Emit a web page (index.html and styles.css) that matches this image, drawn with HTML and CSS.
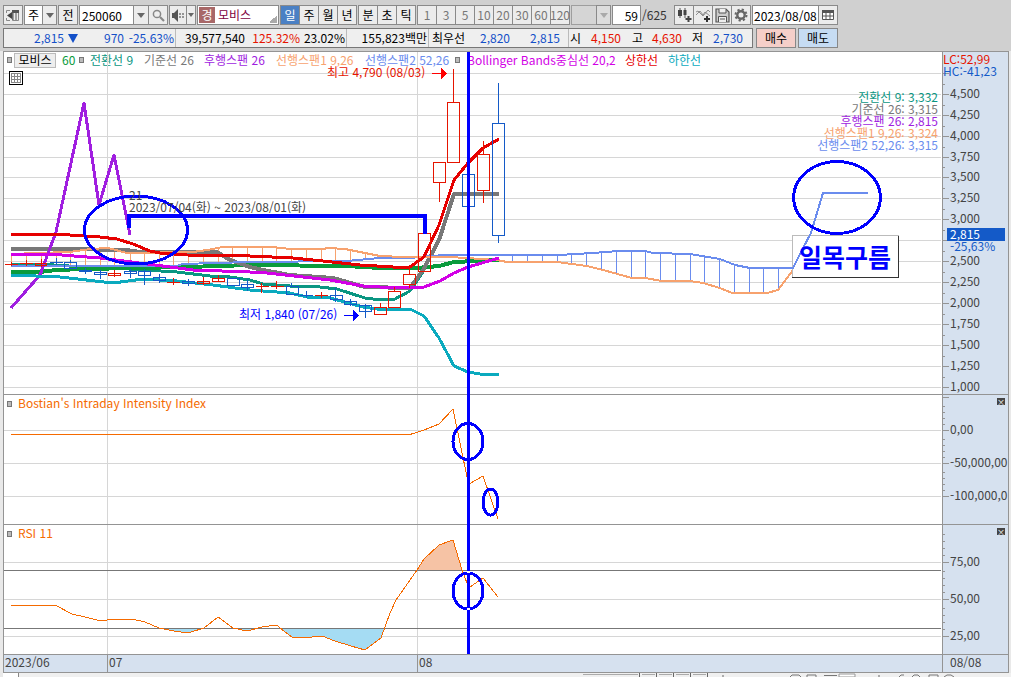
FILE: index.html
```html
<!DOCTYPE html>
<html lang="ko">
<head>
<meta charset="utf-8">
<title>모비스 250060</title>
<link rel="stylesheet" href="styles.css">
</head>
<body>
<header class="top">
  <div class="toolbar">
    <button class="btn" aria-label="패널 접기"><svg width="14" height="13" viewBox="0 0 14 13"><path d="M.5 4V1.500H4M.5 9v2.500H4M6.500 1.500h6v10h-6z" fill="#eee" stroke="#888"/><path d="M6 1h7v3H6z" fill="#555"/><path d="M1 6.500L6 3v7z" fill="#444"/><path d="M7 4v7M10 4v7" stroke="#555"/></svg></button>
    <div class="group"><button class="btn white">주</button><button class="btn arrow" aria-label="종목 구분"><i class="down"></i></button></div>
    <button class="btn">전</button>
    <div class="group"><input class="field code" aria-label="종목코드" value="250060"><button class="btn drop" aria-label="코드 목록"><i class="down"></i></button><button class="btn" aria-label="검색"><svg width="13" height="13" viewBox="0 0 13 13"><circle cx="5" cy="5" r="3.600" fill="#eee" stroke="#888" stroke-width="1.500"/><path d="M8 8l4 4" stroke="#888" stroke-width="2.200"/></svg></button></div>
    <div class="group"><button class="btn sound" aria-label="소리"><svg width="13" height="13" viewBox="0 0 13 13"><path d="M0 4h2l4-4v13L2 9H0z" fill="#555"/><path d="M8 4v5M11 4v5" stroke="#777" stroke-width="1.500" stroke-dasharray="2 1"/></svg></button><button class="btn tiny" aria-label="소리 설정"><i class="down"></i></button></div>
    <div class="field stock"><span class="mark">경</span><span>모비스</span></div>
    <div class="group"><button class="btn on">일</button><button class="btn">주</button><button class="btn">월</button><button class="btn">년</button></div>
    <div class="group"><button class="btn">분</button><button class="btn">초</button><button class="btn">틱</button></div>
    <div class="group dim"><button class="btn">1</button><button class="btn">3</button><button class="btn">5</button><button class="btn">10</button><button class="btn">20</button><button class="btn">30</button><button class="btn">60</button><button class="btn">120</button></div>
    <div class="group dim"><select class="pick" aria-label="주기" disabled><option></option></select><span class="btn arrow"><i class="down"></i></span></div>
    <div class="group count"><input class="field num" id="bars" aria-label="봉 개수" value="59"><label for="bars">/625</label></div>
    <div class="group tools">
      <button class="btn" aria-label="차트 추가"><svg width="15" height="14" viewBox="0 0 15 14"><path d="M3 0v10M8 0v10" stroke="#555"/><path d="M1 2h4v6H1zM6.500 2h3v5h-3z" fill="#444"/><path d="M11.500 8v6M8.500 11h6" stroke="#444" stroke-width="2"/></svg></button>
      <button class="btn" aria-label="지표 추가"><svg width="15" height="14" viewBox="0 0 15 14"><path d="M0 4l2-1 5 5 5-6 2 2M0 7l4-4 3 4 2-3 5 4" fill="none" stroke="#777" stroke-width=".8"/><path d="M11 8v6M8 11h6" stroke="#333" stroke-width="2"/></svg></button>
      <button class="btn" aria-label="저장"><svg width="15" height="15" viewBox="0 0 15 15"><path d="M1 1h10l3 3v10H1z" fill="#ccc" stroke="#555" stroke-width="1.200"/><path d="M4 1v4h7V1M3.500 14V8.500h8V14M5 11h5" fill="#eee" stroke="#555"/></svg></button>
      <button class="btn" aria-label="설정"><svg width="14" height="14" viewBox="0 0 14 14"><circle cx="7" cy="7" r="3.700" fill="none" stroke="#666" stroke-width="2.400"/><circle cx="7" cy="7" r="5.500" fill="none" stroke="#666" stroke-width="2" stroke-dasharray="2.200 2.120"/></svg></button>
    </div>
    <div class="group"><input class="field date" aria-label="날짜" value="2023/08/08"><button class="btn" aria-label="달력"><svg width="12" height="12" viewBox="0 0 12 12"><path d="M.5 1.500h11v9H.5zM4 4v7M8 4v7M0 7h12" fill="#fff" stroke="#555"/><path d="M0 1h12v3H0z" fill="#555"/></svg></button></div>
  </div>
  <div class="quote">
    <div class="figures">
      <div class="cell price blue"><span>2,815</span><i class="fall"></i><span>970</span><span>-25.63%</span></div>
      <div class="cell volume"><span>39,577,540</span><span class="red">125.32%</span><span>23.02%</span></div>
      <div class="cell amount"><span>155,823백만</span></div>
      <div class="cell best"><b>최우선</b><span class="blue">2,820</span><span class="blue">2,815</span></div>
      <div class="cell range"><b>시</b><span class="red">4,150</span><b>고</b><span class="red">4,630</span><b>저</b><span class="blue">2,730</span></div>
    </div>
    <button class="trade buy">매수</button>
    <button class="trade sell">매도</button>
  </div>
</header>
<main class="chart">
  <div class="legend">
    <i class="knob"></i><button class="name">모비스</button><span class="c-green">60</span>
    <i class="knob"></i><span class="c-teal">전환선 9</span><span class="c-gray">기준선 26</span><span class="c-purple">후행스팬 26</span><span class="c-orange">선행스팬1 9,26</span><span class="c-sky">선행스팬2 52,26</span>
    <i class="knob"></i><span class="c-pink">Bollinger Bands중심선 20,2</span><span class="c-red">상한선</span><span class="c-cyan">하한선</span>
  </div>
  <svg class="plot" viewBox="3 51 1006 622" role="img" aria-label="모비스 일봉 차트">
    <g class="crisp">
      <path class="axis-bg" d="M943 52h65v620h-65zM4 655h939v17H4z"/>
      <path class="grid" d="M4 73.500H941M4 94.500H941M4 115.500H941M4 136.500H941M4 157.500H941M4 177.500H941M4 198.500H941M4 219.500H941M4 240.500H941M4 261.500H941M4 282.500H941M4 303.500H941M4 324.500H941M4 345.500H941M4 366.500H941M4 387.500H941M4 430.500H941M4 463.500H941M4 496.500H941M4 562.500H941M4 599.500H941M4 636.500H941M107.500 52V654M417.500 52V654"/>
      <path class="frame" d="M3.500 51.500H1008.500V672.500H3.500zM3 394.500H1008M3 524.500H1008M3 654.500H1008M942.500 52V672M107.500 654V672M417.500 654V672"/>
      <path class="frame" d="M943 73.500h6M943 94.500h6M943 115.500h6M943 136.500h6M943 157.500h6M943 177.500h6M943 198.500h6M943 219.500h6M943 240.500h6M943 261.500h6M943 282.500h6M943 303.500h6M943 324.500h6M943 345.500h6M943 366.500h6M943 387.500h6M943 397.500h6M943 430.500h6M943 463.500h6M943 496.500h6M943 562.500h6M943 599.500h6M943 636.500h6"/>
      <path class="frame" d="M943 84.500h2M943 105.500h2M943 126.500h2M943 147.500h2M943 167.500h2M943 188.500h2M943 209.500h2M943 230.500h2M943 251.500h2M943 272.500h2M943 293.500h2M943 314.500h2M943 335.500h2M943 356.500h2M943 377.500h2M943 406.500h2M943 412.500h2M943 418.500h2M943 424.500h2M943 439.500h2M943 445.500h2M943 451.500h2M943 457.500h2M943 472.500h2M943 478.500h2M943 484.500h2M943 490.500h2M943 534.500h2M943 541.500h2M943 548.500h2M943 555.500h2M943 571.500h2M943 578.500h2M943 585.500h2M943 592.500h2M943 608.500h2M943 615.500h2M943 622.500h2M943 629.500h2"/>
      <path class="tool" d="M9.500 71.500h13v13h-13z"/><path class="tool-grid" d="M11.500 73.500h9v9h-9zM14.500 73v9M17.500 73v9M11 76.500h9M11 79.500h9"/>

      <path class="cloud-up" d="M11.500 254V265M26.500 254V265M41.500 254V265M56.500 254V265M70.500 252V265M85.500 250V265M100.500 248V265M114.500 249V265M130.500 253V265M144.500 253V265M159.500 253V265M173.500 253V265M188.500 252V264M203.500 251V263M218.500 248V263M232.500 247V262M247.500 247V261M262.500 247V261M276.500 247V261M291.500 249V261M306.500 249V261M321.500 249V261M335.500 248V260M350.500 250V260M365.500 253V259"/>
      <path class="cloud-down" d="M512.500 255V262M527.500 255V262M542.500 255V262M557.500 254V262M571.500 254V264M586.500 254V266M601.500 253V270M616.500 251V274M631.500 251V278M645.500 251V278M660.500 253V281M675.500 253V281M690.500 254V281M704.500 256V284M719.500 259V288M734.500 265V293M749.500 268V293M763.500 268V293M778.500 268V289"/>
      <path class="line teal" d="M11 264L40 264 83 267 113 268 177 272 210 276 230 277 250 280 263 284 290 286 320 287 337 289 365 298 373 299 395 299 410 291 423 272 439 240 454 193 499 193"/>
      <path class="line green" d="M11 272L40 272 56 270 84 269 187 267 250 265 347 266 380 268 417 268 439 266 454 262 499 260"/>
      <path class="line gray" d="M11 248.500L90 248.500 97 250 127 250 140 252 217 252 230 260 250 267 263 270 290 275 333 278 365 287 410 288 423 270 439 240 454 194 499 194"/>
      <path class="line sky" d="M11 266L177 266 182 264 250 262 347 261 380 258 410 258 430 256 447 255 558 255 593 253 618 251 645 251 653 253 690 254 720 259 735 265 750 268 790 268"/>
      <path class="line orange" d="M11 254L37 253 70 252 90 249 108 248 127 253 193 252 207 250 223 247 273 247 290 249 323 249 328 248 345 249 360 252 380 256 403 257 450 257 497 260 507 262 557 262 587 266 603 270 632 278 645 278 662 281 690 281 703 283 720 288 732 293 767 293 778 290 793 270"/>
      <path class="line purple" d="M11 308L40 275 56 232 84 103 99 205 114 155 130 235"/>
      <path class="line cyan" d="M11 275L60 277 113 283 143 279 177 281 213 285 250 290 263 291 290 293 307 297 330 298 363 307 377 309 410 309 424 316 439 338 454 366 468 372 480 374 499 374"/>
      <path class="line red-line" d="M11 234L55 234 70 235 100 237 117 239 133 244 150 251 160 253 187 255 250 256 293 258 323 261 360 265 393 267 410 267 424 257 439 225 454 180 468 163 483 148 499 139"/>
      <path class="line pink" d="M11 254.500L55 254.500 100 258 147 264 193 270 250 272 267 273 330 280 363 286 397 288 424 287 440 281 454 273 468 267 499 258"/>

      <path class="up" d="M5 264.500h13M11.500 262v4M20 263.500h13M26.500 260v6M35.500 263.500h11v2h-11zM41.500 259v8M108.500 273.500h12v2h-12zM114.500 270v7M167 282.500h13M173.500 278v7M197.500 281.500h12v2h-12zM203.500 277v8M212.500 278.500h12v3h-12zM218.500 275v7M256 286.500h13M261.500 283v10M271 286.500h13M276.500 281v8M315 295.500h13M321.500 292v6M374.500 307.500h12v7h-12zM380.500 303v4M388.500 291.500h12v16h-12zM394.500 287v4M403.500 274.500h12v10h-12zM409.500 267v7M409.500 285v3M418.500 233.500h12v38h-12zM433.500 162.500h12v20h-12zM439.500 183v19M447.500 102.500h12v60h-12zM453.500 69v33M477.500 154.500h12v36h-12zM483.500 141v13M483.500 191v12"/>
      <path class="down-candle" d="M50 262.500h13M56.500 258v7M64.500 262.500h12v6h-12zM70.500 260v2M79.500 270.500h12v1h-12zM85.500 268v6M94.500 272.500h12v2h-12zM100.500 270v9M124.500 271.500h12v2h-12zM130.500 269v9M138.500 271.500h12v4h-12zM144.500 269v16M153.500 277.500h12v3h-12zM159.500 274v9M182.500 281.500h12v2h-12zM188.500 279v7M227.500 278.500h12v7h-12zM241.500 284.500h12v3h-12zM247.500 279v12M286.500 286.500h12v8h-12zM291.500 283v3M300 295.500h13M306.500 291v7M330.500 295.500h12v4h-12zM335.500 288v14M344.500 301.500h12v3h-12zM350.500 299v7M359.500 305.500h12v6h-12zM365.500 304v14M462.500 174.500h12v32h-12zM492.500 123.500h12v112h-12zM498.500 83v40M498.500 236v7"/>

      <path class="hot" d="M417 570L424 559 439 545 453 540 462 570z"/>
      <path class="cold" d="M159 628L174 631 188 633 204 628zM233 628L247 631 259 628zM280 628L292 637 312 637 322 636 335 641 351 646 365 650 381 638 385 628z"/>
      <path class="band" d="M4 570.500H941M4 628.500H941"/>
      <path class="index" d="M11 434.500L410 434.500 424 430 439 424 453 409 467 477 469 484 483 476 498 519"/>
      <path class="index" d="M11 605.500L56 605.500 72 614 85 617 97 620 107 620 109 619 132 619 145 622 159 628 174 631 188 633 204 628 218 617 233 628 247 631 262 627 277 625 280 628 292 637 312 637 322 636 335 641 351 646 365 650 381 638 390 613 396 600 417 570 424 559 439 545 453 540 462 570 467 583 470 587 483 578 498 597"/>

      <path class="note" d="M792 235h107v43H792z"/>
      <path class="note-light" d="M792.500 278V235.500H899"/>
      <path class="note-dark" d="M898.500 236V277.500H792"/>
      <path class="line sky" d="M790 268L793 268 802 250 811 233 823 193 868 193"/>
      <g class="draw">
        <ellipse cx="136" cy="230" rx="51.500" ry="34"/>
        <ellipse cx="837" cy="197.500" rx="43.500" ry="36"/>
        <ellipse cx="468" cy="441.500" rx="15" ry="18"/>
        <ellipse cx="490.500" cy="502" rx="7.500" ry="13"/>
        <ellipse cx="468" cy="591" rx="15" ry="18"/>
        <path d="M468.500 52V654"/>
        <path class="bracket" d="M129 228V216H425V234"/>
      </g>
      <path class="handle" d="M467 571h3v2h-3zM467 608h3v2h-3z"/>
      <path class="arrow-hi" d="M432 73h9v-5l6 5.500-6 5.500v-5h-9z"/>
      <path class="arrow-lo" d="M344 315h9v-5l6 5.500-6 5.500v-5h-9z"/>
      <path class="now" d="M947 228h58v13h-58z"/>
      <path class="square" d="M7.500 401.500h4v5h-4zM7.500 531.500h4v5h-4z"/>
    </g>
    <g class="c-red"><text x="943" y="64">LC:52,99</text><text x="327" y="77" class="hi">최고 4,790 (08/03)</text></g>
    <text x="943" y="76" class="c-now">HC:-41,23</text>
    <text x="239" y="319" class="c-blue">최저 1,840 (07/26)</text>
    <g class="c-dark"><text x="129" y="200">21</text><text x="129" y="212">2023/07/04(화) ~ 2023/08/01(화)</text></g>
    <g class="end">
      <text x="938" y="102" class="c-teal">전환선 9: 3,332</text>
      <text x="938" y="114" class="c-gray">기준선 26: 3,315</text>
      <text x="938" y="126" class="c-purple">후행스팬 26: 2,815</text>
      <text x="938" y="138" class="c-orange">선행스팬1 9,26: 3,324</text>
      <text x="938" y="150" class="c-sky">선행스팬2 52,26: 3,315</text>
    </g>
    <text x="799" y="267" class="title">일목구름</text>
    <g class="c-dark">
      <text x="950" y="98">4,500</text><text x="950" y="119">4,250</text><text x="950" y="140">4,000</text><text x="950" y="161">3,750</text><text x="950" y="181">3,500</text><text x="950" y="202">3,250</text><text x="950" y="223">3,000</text><text x="950" y="265">2,500</text><text x="950" y="286">2,250</text><text x="950" y="307">2,000</text><text x="950" y="328">1,750</text><text x="950" y="349">1,500</text><text x="950" y="370">1,250</text><text x="950" y="391">1,000</text>
      <text x="950" y="434">0,00</text><text x="950" y="467">-50,000,00</text><text x="950" y="500">-100,000,0</text>
      <text x="950" y="566">75,00</text><text x="950" y="603">50,00</text><text x="950" y="640">25,00</text>
      <text x="5" y="667">2023/06</text><text x="109" y="667">07</text><text x="419" y="667">08</text><text x="950" y="667">08/08</text>
    </g>
    <text x="950" y="239" class="c-white">2,815</text><text x="950" y="251" class="c-now">-25,63%</text>
    <g class="c-index"><text x="18" y="408">Bostian's Intraday Intensity Index</text><text x="18" y="538">RSI 11</text></g>
  </svg>
  <button class="close second" aria-label="지표 닫기">×</button>
  <button class="close third" aria-label="RSI 닫기">×</button>
</main>
<footer class="strip">
  <i class="thumb"></i>
  <svg width="430" height="4" viewBox="580 673 430 4"><path d="M582 674.500h55M641 674.500h13M658 674.500h13M675 674.500h13M692 674.500h13" stroke="#aaa"/><path d="M638.500 673v4M655.500 673v4M672.500 673v4M689.500 673v4M706.500 673v4M722 675v2M878 675v2" stroke="#666"/><path d="M789 677l2-2h7l2 2M806 677v-2h9v2M823 675.500h13M911 677l2-2h4l2 2M928 677v-2h9v2M943 677l3-2h4l3 2M898 677l2-2h3" fill="none" stroke="#777"/><path d="M838 674h16v3h-16z" fill="#fff" stroke="#999"/></svg>
</footer>
</body>
</html>
```

FILE: styles.css
```css
* { box-sizing: border-box; }
body {
  margin: 0;
  min-height: 100vh;
  background: #e9e9e9;
  color: #000;
  font: 12px/16px "Noto Sans CJK KR", sans-serif;
}
button, input, select { font: inherit; color: inherit; margin: 0; padding: 0; border-radius: 0; }
i { display: block; flex: none; }

.top { background: #d0d0d0; padding: 5px 3px 3px; }
.toolbar { display: flex; gap: 1px; height: 20px; margin-bottom: 3px; }
.group { display: flex; }
.group > * + * { margin-left: -1px; }
.btn {
  width: 20px; height: 20px; flex: none;
  display: flex; align-items: center; justify-content: center;
  border: 1px solid #8a8a8a; background: #ececec;
}
.btn svg { flex: none; }
.white { background: #fff; width: 19px; }
.sound { width: 18px; }
.arrow { width: 15px; }
.drop { width: 16px; }
.tiny { width: 10px; }
.down { border: 4px solid transparent; border-top: 5px solid #666; border-bottom: 0; }
.tiny .down { border-left-width: 3px; border-right-width: 3px; border-top-width: 4px; }
.on { background: #4a80c4; color: #fff; }
.dim { color: #777; }
.dim .down { border-top-color: #aaa; }
.dim .arrow { background: #ddd; }
.field { border: 1px solid #8a8a8a; background: #fff; height: 20px; padding: 0 2px; }
.code { width: 55px; }
.stock { width: 82px; display: flex; align-items: center; gap: 3px; padding: 0 1px; color: #800040;
  background: linear-gradient(135deg, transparent 50%, #aaa 50%) right 1px bottom 1px / 8px 8px no-repeat #fff; }
.mark { background: #a86868; color: #fff; width: 16px; text-align: center; }
.pick { width: 26px; height: 20px; appearance: none; border: 1px solid #8a8a8a; background: #d8d8d8; }
.num { width: 29px; text-align: right; }
.count { width: 61px; align-items: center; }
.count label { padding-left: 2px; color: #333; }
.date { width: 67px; padding: 0 1px; }

.quote { display: flex; gap: 2px; height: 20px; }
.figures { display: flex; width: 750px; border: 1px solid #777; background: #efefef; }
.cell { display: grid; align-items: center; text-align: right; padding-right: 1px; border-right: 1px solid #bbb; }
.cell b { font-weight: 400; }
.cell:last-child { border-right: 0; }
.price { grid-template-columns: 60px 14px 46px 50px; width: 172px; }
.volume { grid-template-columns: 69px 55px 45px; width: 171px; }
.amount { width: 82px; }
.best { grid-template-columns: 36px 45px 50px; width: 140px; }
.range { grid-template-columns: 12px 40px 22px 39px 21px 40px; }
.fall { border: 5px solid transparent; border-top: 9px solid #1450c8; border-bottom: 0; justify-self: end; }
.blue { color: #1450c8; }
.red { color: #e61400; }
.trade { width: 40px; border: 1px solid #888; }
.buy { background: #f5cfc9; margin-left: 1px; }
.sell { background: #c6dcf3; }

.chart { position: relative; margin: 0 2px 0 3px; background: #fff; }
.plot { display: block; width: 100%; height: auto; position: relative; pointer-events: none; }
.plot text { font-size: 12px; }
.legend {
  position: absolute; top: 1px; left: 4px;
  display: grid; align-items: center; white-space: nowrap;
  grid-template-columns: 7px 48px 17px 11px 54px 60px 72px 89px 90px 12px 158px 43px 40px;
}
.knob { width: 5px; height: 6px; background: #bbb; border: 1px solid #777; }
.name { width: 42px; height: 15px; line-height: 12px; background: #eee; border: 1px solid #bbb; }
.close {
  position: absolute; right: 4px; width: 8px; height: 7px;
  border: 0; background: #444; color: #fff; font-size: 8px; line-height: 7px;
}
.second { top: 347px; }
.third { top: 477px; }

.crisp { shape-rendering: crispEdges; fill: none; }
.axis-bg { fill: #d6e1ef; }
.grid { stroke: #d6d6d6; }
.frame { stroke: #949494; }
.band { stroke: #777; }
.tool { fill: #fff; stroke: #000; }
.tool-grid { stroke: #888; }
.line { stroke-width: 3; stroke-linejoin: round; }
.green { stroke: #0a9b3c; stroke-width: 4; }
.teal { stroke: #0a9682; }
.gray { stroke: #787878; stroke-width: 4; }
.sky { stroke: #6a8cee; stroke-width: 2; }
.orange { stroke: #f7a26e; stroke-width: 2; }
.purple { stroke: #a01ee0; }
.cyan { stroke: #0aaabe; }
.red-line { stroke: #e60000; }
.pink { stroke: #d200e6; }
.cloud-up { stroke: #f7a26e; }
.cloud-down { stroke: #6a8cee; }
.up { stroke: #e61400; }
.down-candle { stroke: #145ac8; }
.index { stroke: #f56a00; }
.hot { fill: #f6c3a5; }
.cold { fill: #a5dcf3; }
.note { fill: #fff; }
.note-light { stroke: #bbb; }
.note-dark { stroke: #333; }
.draw { stroke: #00f; stroke-width: 3; }
.bracket { stroke-width: 4; }
.handle { fill: #fff; }
.arrow-hi { fill: #f00; }
.arrow-lo { fill: #00f; }
.now { fill: #145ac8; }
.square { fill: #bbb; stroke: #777; }

.c-green { color: #0a9b3c; }
.c-teal { color: #0a9682; fill: #0a9682; }
.c-gray { color: #787878; fill: #787878; }
.c-purple { color: #a01ee0; fill: #a01ee0; }
.c-orange { color: #f7a26e; fill: #f7a26e; }
.c-sky { color: #6a8cee; fill: #6a8cee; }
.c-pink { color: #d200e6; }
.c-red { color: #e60000; fill: #e61400; }
.c-cyan { color: #0aaabe; }
.c-now { fill: #145ac8; }
.c-blue { fill: #00f; }
.c-dark { fill: #444; }
.c-white { fill: #fff; }
.c-index { fill: #f56a00; }
.end { text-anchor: end; }
.plot .title { font-size: 25px; font-weight: 700; fill: #00f; }

.strip { display: flex; justify-content: space-between; height: 4px; background: #f0f0f0; overflow: hidden; margin-left: 3px; }
.thumb { width: 16px; height: 4px; border-right: 1px solid #888; background: #fff; }
```
